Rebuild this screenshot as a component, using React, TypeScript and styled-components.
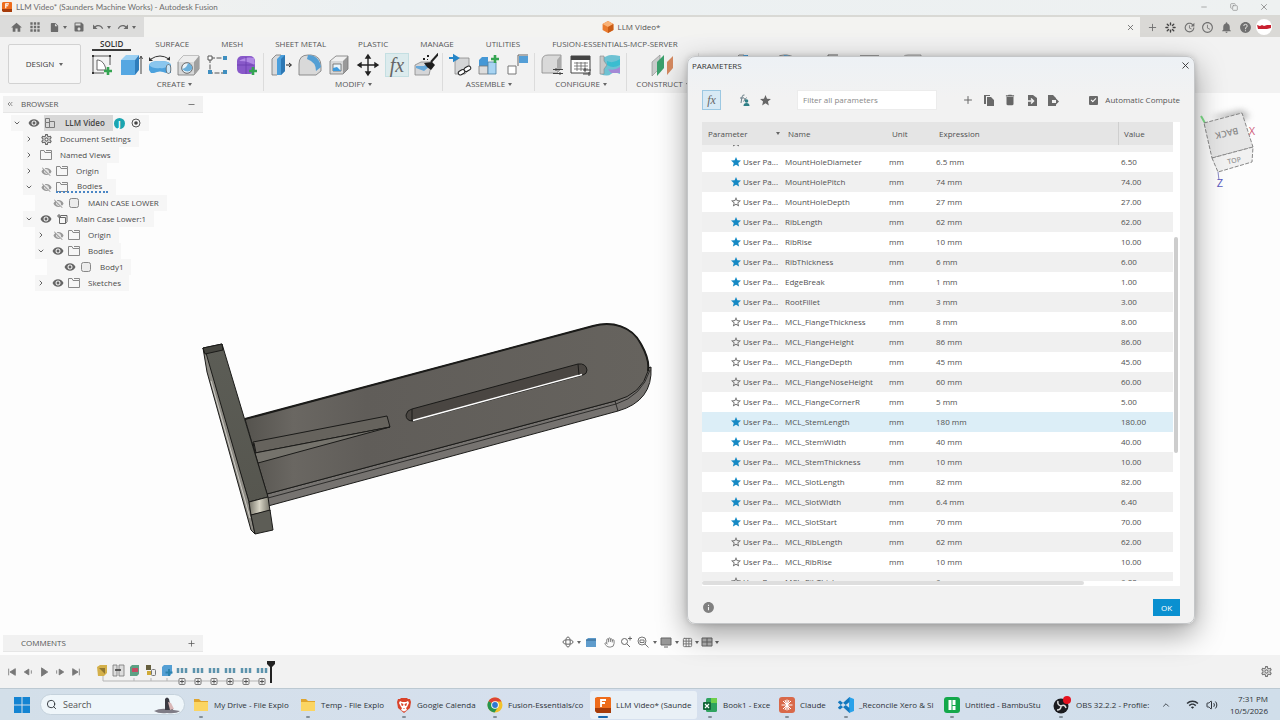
import React, { useLayoutEffect, useRef } from "react";
import styled, { createGlobalStyle, css } from "styled-components";
import {
  MdHome, MdApps, MdSave, MdNotifications, MdHelp, MdStar, MdStarBorder, MdDelete,
  MdVisibility, MdVisibilityOff, MdOutlineSettings, MdWifi, MdInfo, MdUndo, MdRedo,
  MdInsertDriveFile, MdSchedule, MdUpdate,
} from "react-icons/md";
import {
  ChevronDown, ChevronRight, ChevronUp, X, Minus, Copy, Plus, ChevronsLeft, Search, Volume2, Hand, Loader, Grid3x3,
} from "lucide-react";

const ui = `"Open Sans", "Noto Sans", sans-serif`;

const GlobalStyle = createGlobalStyle`
  *, *::before, *::after { box-sizing: border-box; }
  body { margin: 0; background: #fdfdfd; color: #444; font: 8px/12px ${ui}; }
  button, input { font: inherit; color: inherit; }
  svg { display: block; flex: none; }
`;

const Page = styled.div`
  position: relative;
  display: flex;
  flex-direction: column;
  min-height: 100vh;
  overflow: hidden;
`;

const IconButton = styled.button<{ $w?: number; $h?: number }>`
  display: flex;
  align-items: center;
  justify-content: center;
  flex: none;
  width: ${(p) => p.$w ?? 16}px;
  height: ${(p) => p.$h ?? 16}px;
  padding: 0;
  border: 0;
  background: none;
  color: inherit;
`;

const Spacer = styled.div`
  flex: 1;
`;

const Caret = styled.span`
  width: 0;
  height: 0;
  border: 2px solid transparent;
  border-top: 3px solid #666;
  border-bottom: 0;
`;

/* ---------- window title ---------- */

const TitleBar = styled.header`
  display: flex;
  align-items: center;
  gap: 4px;
  height: 17px;
  padding: 0 8px 2px 2px;
  background: linear-gradient(90deg, #f4f2ee, #ebf0f2 30%, #eef1f1);
  border-bottom: 2px solid #d9d9d5;
  color: #6d6d6d;
`;

const WindowTitle = styled.h1`
  margin: 0;
  font: 8px/12px Lato, ${ui};
`;

const WindowControls = styled.div`
  display: flex;
  gap: 14px;
  color: #888;
`;

const QuickRow = styled.div`
  display: flex;
  height: 20px;
  background: #f3f3f1;
`;

const QuickTools = styled.div`
  display: flex;
  align-items: center;
  width: 144px;
  padding-left: 8px;
  gap: 3px;
  background: #dcdcdb;
  color: #6b6b6b;
`;

const QuickGroup = styled.div`
  display: flex;
  align-items: center;
  gap: 1px;
  min-width: 22px;
`;

const DocumentTab = styled.div`
  display: flex;
  flex: 1;
  align-items: center;
  justify-content: center;
  gap: 3px;
  padding-right: 2px;
  color: #555;
`;

const AccountTools = styled.div`
  display: flex;
  align-items: center;
  justify-content: space-between;
  width: 140px;
  padding: 0 8px 0 4px;
  background: #dad9d6;
  color: #707070;
`;

/* ---------- ribbon ---------- */

const Ribbon = styled.div`
  display: flex;
  height: 56px;
  background: #f2f2f2;
`;

const Workspace = styled.button`
  display: flex;
  align-items: center;
  justify-content: center;
  flex: none;
  gap: 5px;
  width: 73px;
  height: 40px;
  margin: 7px 10px 0 8px;
  border: 1px solid #d2d2d2;
  border-radius: 2px;
  background: #f6f6f6;
  color: #3c3c3c;
`;

const RibbonBody = styled.div`
  flex: 1;
  min-width: 0;
`;

const RibbonTabs = styled.nav`
  display: flex;
  gap: 16px;
  padding: 1px 0 0 1px;
`;

const RibbonTab = styled.button<{ $active?: boolean }>`
  height: 13px;
  padding: 0 8px;
  border: 0;
  border-bottom: 2px solid ${(p) => (p.$active ? "#3a3a3a" : "transparent")};
  background: none;
  color: #555;
  line-height: 11px;
  white-space: nowrap;
  ${(p) => p.$active && css`font-weight: 600; color: #333;`}
`;

const RibbonGroups = styled.div`
  display: flex;
  margin-left: -1px;
  padding-top: 2px;
`;

const Group = styled.section`
  display: flex;
  flex-direction: column;
  align-items: center;
  padding-right: 4px;
  margin-right: 5px;
  border-right: 1px solid #dcdcdc;
`;

const GroupTools = styled.div<{ $wide?: boolean }>`
  display: flex;
  gap: ${(p) => (p.$wide ? 18 : 5)}px;
  padding-left: ${(p) => (p.$wide ? 28 : 0)}px;
`;

const GroupLabel = styled.button`
  display: flex;
  align-items: center;
  gap: 3px;
  height: 14px;
  padding: 0;
  border: 0;
  background: none;
  color: #555;
`;

const FxTool = styled(IconButton)`
  border: 1px solid #c4dfe2;
  background: #dcebed;
  font: italic 20px/20px "Liberation Serif", serif;
  color: #666;
`;

/* ---------- canvas ---------- */

const Canvas = styled.main`
  position: relative;
  display: flex;
  flex: 1;
  min-height: 562px;
  background: #fdfdfd;
`;

const Side = styled.aside`
  display: flex;
  flex-direction: column;
  justify-content: space-between;
  width: 203px;
  padding: 3px 0 3px 3px;
`;

const PanelBar = styled.div`
  display: flex;
  align-items: center;
  height: 17px;
  padding: 0 4px 0 3px;
  background: #f1f1f1;
  border-bottom: 1px solid #e6e6e6;
  color: #555;
`;

const PanelName = styled.h2<{ $inset: number }>`
  flex: 1;
  margin: 0 0 0 ${(p) => p.$inset}px;
  font: inherit;
`;

const TreeList = styled.ul`
  margin: 2px 0 0;
  padding: 0;
  list-style: none;
`;

const TreeItem = styled.li<{ $level: number }>`
  display: flex;
  padding-left: ${(p) => 8 + p.$level * 12}px;
`;

const TreeRow = styled.div`
  display: flex;
  align-items: center;
  height: 16px;
  padding-right: 8px;
  background: #f6f6f6;
  color: #4a4a4a;
`;

const Slot = styled.span<{ $w: number; $after: number }>`
  display: flex;
  justify-content: center;
  width: ${(p) => p.$w}px;
  margin-right: ${(p) => p.$after}px;
  color: #666;
`;

const NodeLabel = styled.span<{ $kind?: "root" | "pending" }>`
  display: flex;
  align-items: center;
  height: 12px;
  ${(p) => p.$kind === "root" && css`
    height: 16px; margin-left: -20px; padding: 0 8px 0 21px;
    background: rgba(160, 160, 160, 0.35);
    font-weight: 600; color: #444;
  `}
  ${(p) => p.$kind === "pending" && css`
    margin-left: -20px; padding: 0 6px 0 21px; border-bottom: 2px dotted #4a86c5;
  `}
`;

const UserBadge = styled.span`
  display: grid;
  place-items: center;
  width: 11px;
  height: 11px;
  margin: 0 6px 0 1px;
  border-radius: 50%;
  background: #1ba5b0;
  color: #fff;
  font-weight: 700;
  line-height: 11px;
`;

const ModelView = styled.svg`
  position: absolute;
  left: 190px;
  top: 217px;
`;

const ViewCube = styled.svg`
  position: absolute;
  right: 16px;
  top: 11px;
`;

const NavBar = styled.div`
  position: absolute;
  left: 50%;
  bottom: 4px;
  display: flex;
  align-items: center;
  height: 18px;
  margin-left: -80px;
  padding: 0 1px;
  gap: 2px;
  color: #777;
`;

/* ---------- timeline ---------- */

const Timeline = styled.footer`
  display: flex;
  align-items: center;
  height: 33px;
  padding: 0 6px 0 4px;
  background: #f2f2f2;
  color: #777;
`;

const Transport = styled.div`
  display: flex;
  margin-right: 12px;
`;

/* ---------- parameters dialog ---------- */

const Dialog = styled.section`
  position: absolute;
  top: 56px;
  right: 85px;
  width: 508px;
  padding: 0 14px 7px;
  border: 1px solid #c4c6c8;
  border-radius: 8px;
  background: linear-gradient(#edf1f5, #f2f2f2 40px);
  box-shadow: 0 10px 30px rgba(0, 0, 0, 0.38), 0 0 6px rgba(0, 0, 0, 0.16);
`;

const DialogTitle = styled.div`
  display: flex;
  align-items: center;
  justify-content: space-between;
  height: 17px;
  margin: 0 -13px 0 -10px;
  color: #333;
`;

const DialogName = styled.h2`
  margin: 0;
  font: inherit;
`;

const DialogTools = styled.div`
  display: flex;
  align-items: center;
  height: 20px;
  margin: 16px 0 12px;
  color: #666;
`;

const ToggleFx = styled(IconButton)`
  margin-right: 14px;
  border: 1px solid #9cc8e2;
  background: #d8eaf5;
  font: italic 12px/12px "Liberation Serif", serif;
`;

const FilterInput = styled.input`
  width: 140px;
  height: 20px;
  margin: 0 20px;
  padding: 0 5px 1px;
  border: 1px solid #ececec;
  background: #fff;
  &::placeholder { color: #888; opacity: 1; }
`;

const ComputeLabel = styled.label`
  display: flex;
  align-items: center;
  gap: 7px;
  margin-left: auto;
  white-space: nowrap;
  color: #555;
`;

const Checkbox = styled.input`
  appearance: none;
  position: relative;
  width: 9px;
  height: 9px;
  margin: 0;
  border-radius: 1px;
  background: #6a6a6a;
  &:checked::after {
    content: "";
    position: absolute;
    left: 2px;
    top: 2px;
    width: 5px;
    height: 3px;
    border: solid #fff;
    border-width: 0 0 1px 1px;
    transform: rotate(-45deg);
  }
`;

const TableFrame = styled.div`
  display: grid;
  grid-template-columns: 1fr 7px;
  grid-template-rows: 459px 5px;
  background: #fff;
`;

const TableScroll = styled.div`
  overflow: auto;
  scrollbar-width: none;
`;

const Table = styled.table`
  width: 100%;
  table-layout: fixed;
  border-spacing: 0;
  color: #505050;
`;

const Th = styled.th<{ $divider?: boolean }>`
  position: sticky;
  top: 0;
  z-index: 1;
  height: 23px;
  padding: 0 0 0 5px;
  background: #e5e5e5;
  border-left: 1px solid ${(p) => (p.$divider ? "#cfcfcf" : "#e5e5e5")};
  font-weight: 400;
  text-align: left;
`;

const HeadSort = styled.span`
  display: flex;
  align-items: center;
  justify-content: space-between;
  padding-right: 2px;
`;

const Row = styled.tr<{ $selected?: boolean }>`
  background: #fff;
  &:nth-child(odd) { background: #f0f0f0; }
  && { ${(p) => p.$selected && css`background: #dceef7;`} }
`;

const Td = styled.td`
  height: 20px;
  padding: 0 0 0 3px;
  white-space: nowrap;
`;

const OwnerCell = styled.span`
  display: flex;
  align-items: center;
  gap: 1px;
  padding-left: 25px;
`;

const VTrack = styled.div`
  padding: 115px 2px 0 1px;
`;

const VThumb = styled.div`
  height: 216px;
  border-radius: 2px;
  background: #cdcdcd;
`;

const HThumb = styled.div`
  width: 382px;
  height: 4px;
  border-radius: 2px;
  background: #dedede;
`;

const DialogFoot = styled.div`
  display: flex;
  align-items: center;
  justify-content: space-between;
  margin-top: 13px;
  color: #808080;
`;

const OkButton = styled.button`
  width: 27px;
  height: 17px;
  padding: 0;
  border: 0;
  background: #0a90d0;
  color: #fff;
`;

/* ---------- taskbar ---------- */

const Taskbar = styled.nav`
  display: flex;
  align-items: center;
  height: 32px;
  padding: 0 12px;
  border-top: 1px solid #bcc9d2;
  background: linear-gradient(90deg, #d3dfe9, #d6e0ee 50%, #d0deea);
  color: #2d3238;
`;

const SearchBox = styled.label`
  display: flex;
  align-items: center;
  flex: none;
  gap: 6px;
  width: 145px;
  height: 21px;
  margin: 0 3px 0 9px;
  padding: 0 3px 0 5px;
  border: 1px solid #c5d2dc;
  border-radius: 11px;
  background: #eff6fa;
`;

const SearchInput = styled.input`
  flex: 1;
  min-width: 0;
  padding: 0;
  border: 0;
  background: none;
  font-size: 9px;
  &::placeholder { color: #555; opacity: 1; }
`;

const TaskButton = styled.button<{ $active?: boolean; $w: number }>`
  position: relative;
  display: flex;
  align-items: center;
  gap: 5px;
  flex: none;
  width: ${(p) => p.$w}px;
  height: 28px;
  padding: 0 0 0 5px;
  border: 0;
  border-radius: 3px;
  background: ${(p) => (p.$active ? "#e9f0f6" : "none")};
  white-space: nowrap;
  &::after {
    content: "";
    position: absolute;
    left: ${(p) => (p.$active ? 8 : 11)}px;
    bottom: 1px;
    width: ${(p) => (p.$active ? 10 : 4)}px;
    height: 2px;
    border-radius: 1px;
    background: ${(p) => (p.$active ? "#1767ae" : "#84909a")};
  }
`;

const Tray = styled.div`
  display: flex;
  align-items: center;
  gap: 7px;
  margin-left: auto;
`;

const TrayToggle = styled(IconButton)`
  margin-right: 5px;
`;

const Clock = styled.time`
  margin-left: 5px;
  text-align: right;
`;

/* ---------- ribbon drawings ---------- */

const GreenPlus = ({ x, y }: { x: number; y: number }) => (
  <path d={`M${x - 4} ${y}h8M${x} ${y - 4}v8`} stroke="#35a552" strokeWidth="2.6" />
);
const Solid = () => (
  <>
    <path d="M3 8l6-5h11l-4 5z" fill="#f0f0f0" />
    <path d="M16 8l5-5v13l-5 5z" fill="#999" />
    <path d="M3 8h13v13H3z" fill="#d6d7d8" />
    <path d="M3 21V8l6-5h12v13l-5 5z" fill="none" stroke="#777" strokeWidth=".8" />
  </>
);

const drawings: Record<string, React.ReactNode> = {
  sketch: (
    <>
      <path d="M3 3h17v9M3 3v17h11" fill="none" stroke="#555" strokeWidth="1" />
      <path d="M7 17V7c5 0 8 4 9 10z" fill="#fff" stroke="#666" />
      <path d="M2 2h2v2H2zM19 2h2v2h-2zM2 19h2v2H2z" fill="#333" />
      <GreenPlus x={18} y={18} />
    </>
  ),
  extrude: (
    <>
      <path d="M2 7l5-5h13l-4 5z" fill="#9bd0f3" />
      <path d="M16 7l4-5v15l-4 5z" fill="#2f7dbb" />
      <path d="M2 7h14v15H2z" fill="#55a7e2" />
      <path d="M22 21V4M20.500 6L22 3l1.500 3" fill="none" stroke="#444" />
    </>
  ),
  revolve: (
    <>
      <path d="M1 12q1-4 11-4t11 4v8h-5q-6-3-12 0H3l-2-3z" fill="#4da2dd" />
      <path d="M1 12q1-4 11-4t11 4q-5 4-11 3-7 1-11-3z" fill="#8ac6ee" />
      <ellipse cx="20.500" cy="16" rx="2.300" ry="4.500" fill="#cde6f7" stroke="#555" strokeWidth=".7" />
      <path d="M3 6q9-6 18 0" fill="none" stroke="#333" />
      <path d="M1 4v4h4zM22 3.500v4l-3.500-1z" fill="#333" />
    </>
  ),
  hole: (
    <>
      <path d="M1 9l5-6h16v13l-5 6H1z" fill="#d6d7d8" stroke="#777" strokeWidth=".8" />
      <path d="M1 9l5-6h16l-5 6z" fill="#ededed" />
      <path d="M17 9l5-6v13l-5 6z" fill="#a0a0a0" />
      <circle cx="10" cy="15" r="5.300" fill="#e8f2f8" stroke="#666" />
      <path d="M5 16q5-1 6-6 5 2 4 6-4 5-10 0z" fill="#6db1dc" />
    </>
  ),
  pattern: (
    <>
      <path d="M4 5h15M4 5v15h15" fill="none" stroke="#555" strokeDasharray="5 1.500" />
      <path d="M2 3h4v4H2z" fill="#fff" stroke="#555" />
      <path d="M17 3h4v4h-4zM2 17h4v4H2zM17 17h4v4h-4z" fill="#3f8fc0" />
    </>
  ),
  form: (
    <>
      <rect x="2" y="3" width="18" height="18" rx="5" fill="#8859c9" />
      <path d="M4 8q7-5 15-3l1 8q-5-5-16-5z" fill="#b28ae6" />
      <path d="M11 4v17M2 12h18" stroke="#6b3cae" strokeWidth=".8" />
      <GreenPlus x={18} y={18} />
    </>
  ),
  press: (
    <>
      <path d="M3 6l4-4h5v16l-4 4H3z" fill="#d8dadc" stroke="#777" strokeWidth=".8" />
      <path d="M8 6l4-4h4v16l-4 4H8z" fill="#4b9fdc" />
      <path d="M12 6l4-4v16l-4 4z" fill="#2d78b4" />
      <path d="M17 12h5M20 10l2.500 2-2.500 2" fill="none" stroke="#222" />
    </>
  ),
  fillet: (
    <>
      <path d="M1 22V11q0-9 9-9h3q10 1 10 11v5l-5 4z" fill="#d9d9d9" stroke="#777" strokeWidth=".8" />
      <path d="M10 2q11 0 13 12l-5 4q0-9-9-12z" fill="#549fd4" />
    </>
  ),
  shell: (
    <>
      <Solid />
      <path d="M6 11h8v7H6z" fill="#e9f5fc" stroke="#666" strokeWidth=".8" />
      <path d="M6 15l4-1 4 4H6z" fill="#3f9bdd" />
    </>
  ),
  move: (
    <path d="M12 3v18M3 12h18M12 2L10 5h4zM12 22l-2-3h4zM2 12l3-2v4zM22 12l-3-2v4z" fill="#222" stroke="#222" strokeWidth="1.400" />
  ),
  clean: (
    <>
      <path d="M1 12l6-3h11l-3 13H1z" fill="#d5d6d8" stroke="#888" strokeWidth=".8" />
      <path d="M2 13h8l3-3 3 3-6 5-8-3z" fill="#68a9da" />
      <path d="M25 0L17 9" stroke="#222" strokeWidth="2" />
      <path d="M10 10l8-1 3 3-4 5-4-3z" fill="#1d1d1d" />
      <path d="M9 5h2v2H9zM13 2h2v2h-2zM13 6h1v1h-1z" fill="#222" />
    </>
  ),
  insert: (
    <>
      <path d="M7 8l4-3h10v12l-4 4H7z" fill="#d5d6d7" stroke="#888" strokeWidth=".8" />
      <path d="M1 5h6M6 2.500L10 5 6 7.500z" fill="#2686c8" stroke="#2686c8" strokeWidth="2" />
      <rect x="10" y="17" width="7" height="4" rx="2" fill="#fff" stroke="#222" transform="rotate(-30 14 19)" />
      <rect x="16" y="14" width="7" height="4" rx="2" fill="#fff" stroke="#222" transform="rotate(-30 19 16)" />
    </>
  ),
  component: (
    <>
      <path d="M2 7l3-3h6v17H2z" fill="#4598d6" />
      <path d="M2 13h9v8H2z" fill="#ddd" stroke="#777" strokeWidth=".8" />
      <path d="M11 9h8v12h-8z" fill="#a8d4f2" stroke="#4a7ea3" strokeWidth=".8" />
      <GreenPlus x={18} y={6} />
    </>
  ),
  joint: (
    <>
      <path d="M12 13V2h10" fill="none" stroke="#666" />
      <path d="M13 3h9v7h-9z" fill="#549ed6" />
      <path d="M2 13h8v8H2z" fill="#fff" stroke="#777" />
    </>
  ),
  config: (
    <>
      <path d="M2 8q0-6 6-6h13v14l-4 4H2z" fill="#d9d9d9" stroke="#888" strokeWidth=".8" />
      <path d="M17 7l4-5v14l-4 4z" fill="#aaa" />
      <path d="M13 16.500h10M13 20.500h10M16 15v3M20 19v3" stroke="#444" />
    </>
  ),
  table: (
    <>
      <path d="M2 3h19v17H2z" fill="#fff" stroke="#444" />
      <path d="M2 3h19v4H2z" fill="#444" />
      <path d="M5 10h14M5 13h14M5 16h14M8 9v9M12 9v9M16 9v9" stroke="#666" strokeWidth=".8" />
      <path d="M14 17h8M14 21h8M16 15v4M20 19v4" stroke="#444" />
    </>
  ),
  rules: (
    <>
      <path d="M2 3q4 2 7 0t13 0v18q-6-3-9 0t-11 0z" fill="#6ec2d3" />
      <path d="M2 3h4v5l3 4-3 4v5H2z" fill="#c8c8c8" stroke="#888" strokeWidth=".6" />
      <path d="M9 8q6 3 13-2v6q-7 4-13 0z" fill="#3bbdd0" />
      <path d="M10 16q6 2 12-2v6h-9z" fill="#a489d6" />
    </>
  ),
  plane: (
    <>
      <path d="M1 9l8-7v13l-8 8z" fill="#c9cbcb" stroke="#888" strokeWidth=".6" />
      <path d="M6 9l7-7v13l-7 8z" fill="#3b9f6c" />
      <path d="M16 9l6-6v12l-6 7z" fill="#d58960" />
    </>
  ),
};

const Drawing = ({ name }: { name: string }) => (
  <svg width="24" height="24" viewBox="0 0 24 24" fill="none" stroke="none">{drawings[name]}</svg>
);

const groups: { name: string; tools: string[] }[] = [
  { name: "CREATE", tools: ["sketch", "extrude", "revolve", "hole", "pattern", "form"] },
  { name: "MODIFY", tools: ["press", "fillet", "shell", "move", "fx", "clean"] },
  { name: "ASSEMBLE", tools: ["insert", "component", "joint"] },
  { name: "CONFIGURE", tools: ["config", "table", "rules"] },
];

const ribbonTabs = ["SOLID", "SURFACE", "MESH", "SHEET METAL", "PLASTIC", "MANAGE", "UTILITIES", "FUSION-ESSENTIALS-MCP-SERVER"];

/* ---------- browser tree ---------- */

type Node = {
  text: string; level: number; open?: boolean; leaf?: boolean; eye?: "on" | "off";
  icon: "doc" | "gear" | "folder" | "body" | "part"; kind?: "root" | "pending";
};

const nodes: Node[] = [
  { text: "LLM Video", level: 0, open: true, eye: "on", icon: "doc", kind: "root" },
  { text: "Document Settings", level: 1, icon: "gear" },
  { text: "Named Views", level: 1, icon: "folder" },
  { text: "Origin", level: 1, eye: "off", icon: "folder" },
  { text: "Bodies", level: 1, open: true, eye: "off", icon: "folder", kind: "pending" },
  { text: "MAIN CASE LOWER", level: 2, leaf: true, eye: "off", icon: "body" },
  { text: "Main Case Lower:1", level: 1, open: true, eye: "on", icon: "part" },
  { text: "Origin", level: 2, eye: "off", icon: "folder" },
  { text: "Bodies", level: 2, open: true, eye: "on", icon: "folder" },
  { text: "Body1", level: 3, leaf: true, eye: "on", icon: "body" },
  { text: "Sketches", level: 2, eye: "on", icon: "folder" },
];

const nodeIcon = {
  doc: (
    <svg width="12" height="12" viewBox="0 0 12 12" fill="none" stroke="#666">
      <path d="M1.500 1.500h4v4h-4zM1.500 5.500v5h4v-5M5.500 4.500h5v6h-5z" />
    </svg>
  ),
  gear: <MdOutlineSettings size={13} />,
  folder: (
    <svg width="12" height="12" viewBox="0 0 12 12" fill="none" stroke="#888">
      <path d="M.5 10.500v-9h3.500l1 2h6.500v7zM6 1.500h5.500v2" />
    </svg>
  ),
  body: (
    <svg width="12" height="12" viewBox="0 0 12 12">
      <rect x="1.500" y="1.500" width="9" height="9" rx="2" fill="#ececec" stroke="#888" />
    </svg>
  ),
  part: (
    <svg width="12" height="12" viewBox="0 0 12 12" fill="none" stroke="#666">
      <path d="M3.500 4.500h6v6h-6zM3.500 4.500l1.500-2h6v6l-1.500 2M1 3h4M3 1v4" />
    </svg>
  ),
};

const Tree = () => (
  <TreeList>
    {nodes.map((n, i) => (
      <TreeItem key={i} $level={n.level}>
        <TreeRow>
          <Slot $w={12} $after={4}>
            {!n.leaf && (n.open ? <ChevronDown size={8} strokeWidth={3} /> : <ChevronRight size={8} strokeWidth={3} />)}
          </Slot>
          {n.eye && (
            <Slot $w={14} $after={2}>
              {n.eye === "on" ? <MdVisibility size={12} /> : <MdVisibilityOff size={11} color="#999" />}
            </Slot>
          )}
          <Slot $w={14} $after={7}>{nodeIcon[n.icon]}</Slot>
          <NodeLabel $kind={n.kind}>{n.text}</NodeLabel>
          {n.kind === "root" && (
            <>
              <UserBadge>J</UserBadge>
              <svg width="10" height="10" viewBox="0 0 10 10">
                <circle cx="5" cy="5" r="4" fill="none" stroke="#555" />
                <circle cx="5" cy="5" r="1.800" fill="#444" />
              </svg>
            </>
          )}
        </TreeRow>
      </TreeItem>
    ))}
  </TreeList>
);

/* ---------- model ---------- */

const Model = () => (
  <ModelView width="480" height="240" viewBox="190 310 480 240" fill="none" stroke="#1b1b19" strokeLinejoin="round">
    <defs>
      <linearGradient id="plate" x1="0" x2="1">
        <stop offset="0" stopColor="#55534e" /><stop offset=".12" stopColor="#6a6762" />
        <stop offset=".3" stopColor="#605d59" /><stop offset="1" stopColor="#66635e" />
      </linearGradient>
      <linearGradient id="flange" x1="0" y1="0" x2="0" y2="1">
        <stop offset="0" stopColor="#5c5d56" /><stop offset="1" stopColor="#56564f" />
      </linearGradient>
      <linearGradient id="shine" x1="0" x2="1">
        <stop offset="0" stopColor="#77756a" /><stop offset=".5" stopColor="#d8d5c6" /><stop offset="1" stopColor="#77756a" />
      </linearGradient>
    </defs>
    <path d="M267 494L615 401Q638 394 648 368L651 367Q653 401 618 411L268 506z" fill="#767370" />
    <path d="M245 419L593 326C612 321 632 326 641 344Q650 360 648 371Q642 394 615 401L267 494z" fill="url(#plate)" />
    <path d="M245 419L593 326C612 321 632 326 641 344Q650 360 648 371" strokeWidth="2" />
    <path d="M268 498L616 404Q642 396 650 370M615 401L618 411" strokeWidth=".8" />
    <path d="M412 409L578 364Q586 363 587 370Q587 374 583 375L413 421Q406 421 406 415Q407 410 412 409z" fill="#4a4642" />
    <path d="M413 420.500L582 374.500" stroke="#fff" strokeWidth="1.400" />
    <path d="M412 409V421M578 364L579 375" />
    <path d="M253 442L387 416L390 427L255 453z" fill="#66635d" />
    <path d="M255 453L390 427L258 463z" fill="#75736c" />
    <path d="M254 443L256 453" />
    <path d="M203 348L222 344L268 497L249 502z" fill="url(#flange)" />
    <path d="M203 348L206 353L249 502L251 515L255 534L251 530L207 372z" fill="#8d8b84" />
    <path d="M211 381L250 518" stroke="#d0cec8" />
    <path d="M203 348L222 344L223 350L205 354z" fill="#45453f" />
    <path d="M249 502L268 497L270 511L251 515z" fill="url(#shine)" />
    <path d="M251 515L270 510L273 530L255 534z" fill="#5d5d56" />
  </ModelView>
);

const Cube = () => (
  <ViewCube width="64" height="88" viewBox="1200 104 64 88">
    <defs>
      <filter id="soft" x="-30%" y="-80%" width="160%" height="260%"><feGaussianBlur stdDeviation="3" /></filter>
    </defs>
    <path d="M1210 117L1242 110L1250 116L1240 122z" fill="#999" opacity=".7" filter="url(#soft)" />
    <path d="M1201 116l4 7" stroke="#7fe08a" strokeWidth="2" />
    <path d="M1204 123L1242 113L1253 147L1212 158z" fill="#e6e6e6" stroke="#888" strokeDasharray="4 1.500" />
    <path d="M1212 158L1253 147L1252 162L1218 172z" fill="#f1f1f1" stroke="#888" strokeDasharray="4 1.500" />
    <path d="M1218 172l1 8" stroke="#8a8ac8" />
    <g fontFamily={ui} textAnchor="middle">
      <text x="1227" y="138" fontSize="9" fontWeight="600" fill="#8a8a8a" transform="rotate(167 1227 134)">BACK</text>
      <text x="1234" y="163" fontSize="7" fontWeight="600" fill="#999" transform="rotate(-12 1234 160)">TOP</text>
      <text x="1252" y="135" fontSize="11" fill="#d0607a">X</text>
      <text x="1220" y="187" fontSize="11" fill="#5a5ac0">Z</text>
    </g>
  </ViewCube>
);

/* ---------- parameters ---------- */

type Param = [fav: boolean, name: string, expr: string, value: string];

const params: Param[] = [
  [true, "MountHoleDiameter", "6.5 mm", "6.50"],
  [true, "MountHolePitch", "74 mm", "74.00"],
  [false, "MountHoleDepth", "27 mm", "27.00"],
  [true, "RibLength", "62 mm", "62.00"],
  [true, "RibRise", "10 mm", "10.00"],
  [true, "RibThickness", "6 mm", "6.00"],
  [true, "EdgeBreak", "1 mm", "1.00"],
  [true, "RootFillet", "3 mm", "3.00"],
  [false, "MCL_FlangeThickness", "8 mm", "8.00"],
  [false, "MCL_FlangeHeight", "86 mm", "86.00"],
  [false, "MCL_FlangeDepth", "45 mm", "45.00"],
  [false, "MCL_FlangeNoseHeight", "60 mm", "60.00"],
  [false, "MCL_FlangeCornerR", "5 mm", "5.00"],
  [true, "MCL_StemLength", "180 mm", "180.00"],
  [true, "MCL_StemWidth", "40 mm", "40.00"],
  [true, "MCL_StemThickness", "10 mm", "10.00"],
  [true, "MCL_SlotLength", "82 mm", "82.00"],
  [true, "MCL_SlotWidth", "6.4 mm", "6.40"],
  [true, "MCL_SlotStart", "70 mm", "70.00"],
  [false, "MCL_RibLength", "62 mm", "62.00"],
  [false, "MCL_RibRise", "10 mm", "10.00"],
  [false, "MCL_RibThickness", "6 mm", "6.00"],
];

const ParameterTable = () => {
  const scroller = useRef<HTMLDivElement>(null);
  useLayoutEffect(() => {
    if (scroller.current) scroller.current.scrollTop = 13;
  }, []);
  return (
    <TableFrame>
      <TableScroll ref={scroller}>
        <Table>
          <colgroup>
            <col width="80" /><col width="104" /><col width="47" /><col width="185" /><col />
          </colgroup>
          <thead>
            <tr>
              <Th><HeadSort>Parameter <Caret /></HeadSort></Th>
              <Th>Name</Th>
              <Th>Unit</Th>
              <Th>Expression</Th>
              <Th $divider>Value</Th>
            </tr>
          </thead>
          <tbody>
            <Row>
              <Td colSpan={5}><OwnerCell><MdStarBorder size={12} color="#666" /></OwnerCell></Td>
            </Row>
            {params.map(([fav, name, expr, value]) => (
              <Row key={name} $selected={name === "MCL_StemLength"}>
                <Td>
                  <OwnerCell>
                    {fav ? <MdStar size={12} color="#1689c4" /> : <MdStarBorder size={12} color="#666" />}
                    User Pa...
                  </OwnerCell>
                </Td>
                <Td>{name}</Td>
                <Td>mm</Td>
                <Td>{expr}</Td>
                <Td>{value}</Td>
              </Row>
            ))}
          </tbody>
        </Table>
      </TableScroll>
      <VTrack><VThumb /></VTrack>
      <HThumb />
    </TableFrame>
  );
};

const Parameters = () => (
  <Dialog role="dialog" aria-label="Parameters">
    <DialogTitle>
      <DialogName>PARAMETERS</DialogName>
      <IconButton aria-label="Close"><X size={11} strokeWidth={2} /></IconButton>
    </DialogTitle>
    <DialogTools>
      <ToggleFx $w={19} $h={20} aria-label="All parameters">fx</ToggleFx>
      <IconButton $w={18} aria-label="User parameters">
        <svg width="12" height="12" viewBox="0 0 12 12">
          <path d="M6.500 1Q4.500 .5 4 3L3 9M2 4h3.500M5.500 3.500l3 4M8.500 3.500l-3 4" fill="none" stroke="#6a7f88" />
          <circle cx="8.500" cy="7" r="1.800" fill="#2f7f86" />
          <path d="M5.500 12q0-3 3-3t3 3z" fill="#2f7f86" />
        </svg>
      </IconButton>
      <IconButton $w={24} aria-label="Favorites"><MdStar size={13} /></IconButton>
      <FilterInput aria-label="Filter all parameters" placeholder="Filter all parameters" />
      <IconButton $w={21} aria-label="Add"><Plus size={12} /></IconButton>
      <IconButton $w={21} aria-label="Copy">
        <svg width="12" height="12" viewBox="0 0 12 12" fill="#6a6a6a"><path d="M1 1h6v1H3v8H1zM4 3h4l3 3v6H4z" /></svg>
      </IconButton>
      <IconButton $w={22} aria-label="Delete"><MdDelete size={14} /></IconButton>
      <IconButton $w={21} aria-label="Import">
        <svg width="12" height="12" viewBox="0 0 12 12"><path d="M2 1h5l4 3v8H2z" fill="#6a6a6a" /><path d="M0 7h7M5 4.500L7.500 7 5 9.500" fill="none" stroke="#f2f2f2" strokeWidth="1.500" /></svg>
      </IconButton>
      <IconButton $w={21} aria-label="Export">
        <svg width="12" height="12" viewBox="0 0 12 12"><path d="M1 1h5l3 3v2H5v3h4v3H1zM9 4.500L12 7.500 9 10.500z" fill="#6a6a6a" /></svg>
      </IconButton>
      <ComputeLabel>
        <Checkbox type="checkbox" defaultChecked />
        Automatic Compute
      </ComputeLabel>
    </DialogTools>
    <ParameterTable />
    <DialogFoot>
      <IconButton $w={12} aria-label="Information"><MdInfo size={13} /></IconButton>
      <OkButton>OK</OkButton>
    </DialogFoot>
  </Dialog>
);

/* ---------- timeline drawings ---------- */

const History = () => (
  <svg width="182" height="32" viewBox="96 656 182 32">
    <path d="M103 674v7h160M134 678v3M151 678v3M167 678v3" fill="none" stroke="#b5b5b5" />
    <path d="M97 667l3-2h7v8l-3 3h-6z" fill="#d4b04a" /><path d="M99 668h6v6z" fill="#8f7630" />
    <path d="M113 665h4v11h-4zM119 665h5v11h-5z" fill="#ddd" stroke="#777" strokeWidth=".8" /><path d="M115 670h6" stroke="#333" strokeWidth="1.500" />
    <path d="M130 667l2-2h7v9l-2 2h-7z" fill="#5da184" /><path d="M132 668h6v4h-6z" fill="#c54c63" />
    <path d="M146 665h5v5h-5z" fill="#665f3e" /><path d="M147 671h4v4h-4z" fill="#d0ab38" /><rect x="151.500" y="669.500" width="4" height="6" rx="1" fill="#eee" stroke="#777" />
    <path d="M162 667l2-2h8v8l-2 3h-8z" fill="#549fd4" /><path d="M169 669v7M165.500 672.500h7" stroke="#2c83ad" strokeWidth="2" />
    {[182, 198, 214, 230, 246, 262].map((x) => (
      <g key={x}>
        <path d={`M${x - 4} 668v5M${x} 668v5M${x + 4} 668v5`} stroke="#5c93ad" strokeWidth="2.500" />
        <rect x={x - 3} y="678.500" width="6" height="6" rx="1" fill="#eee" stroke="#777" />
        <path d={`M${x - 2} 681.500h4M${x} 679.500v4`} stroke="#555" />
      </g>
    ))}
    <path d="M267 661h8v3l-3 3v16h-2v-16l-3-3z" fill="#222" />
  </svg>
);

const transport = ["M2 2v8M10 2L3.500 6 10 10z", "M7 2.500L1.500 6 7 9.500zM10 4v4", "M3 1L10.500 6 3 11z", "M5 2.500L10.500 6 5 9.500zM2 4v4", "M10 2v8M2 2L8.500 6 2 10z"];

/* ---------- taskbar icons ---------- */

const Folder = () => (
  <svg width="16" height="16" viewBox="0 0 16 16">
    <path d="M1 2h5l2 2h7v9H1z" fill="#e0a52e" /><path d="M1 5h14v9H1z" fill="#fbd562" />
  </svg>
);
const Brave = () => (
  <svg width="16" height="16" viewBox="0 0 16 16">
    <path d="M5 1h6l1 1h2l1 3-1 6-6 5-6-5-1-6 1-3h2z" fill="#d9432b" />
    <path d="M4 4l2 1h4l2-1 1 2-2 4-1 1 1 2-3 1.500L5 13l1-2-1-1-2-4z" fill="#fff" />
    <path d="M5 6l2.500 1L7 9 5.500 8.500zM11 6L8.500 7 9 9l1.500-.5zM7 11h2l-1 1z" fill="#d9432b" />
  </svg>
);
const Chrome = () => (
  <svg width="16" height="16" viewBox="0 0 16 16">
    <circle cx="8" cy="8" r="7.500" fill="#f2c22c" />
    <path d="M8 8L1.500 4.200A7.500 7.500 0 0 1 14.500 4.500H8z" fill="#dd4436" />
    <path d="M8 8L1.500 4.200A7.500 7.500 0 0 0 7.500 15.500L11 10z" fill="#27954f" />
    <circle cx="8" cy="8" r="3.800" fill="#fff" /><circle cx="8" cy="8" r="2.900" fill="#2f77d2" />
  </svg>
);
const Fusion = ({ size = 16 }: { size?: number }) => (
  <svg width={size} height={size} viewBox="0 0 16 16">
    <path d="M2 0h13l1 1v15H2l-2-2V1z" fill="#ee6c1b" /><path d="M0 11h16v5H2l-2-2z" fill="#a63c0a" />
    <path d="M6 10V3h5M6 6h4" fill="none" stroke="#fff" strokeWidth="1.800" />
  </svg>
);
const Excel = () => (
  <svg width="16" height="16" viewBox="0 0 16 16">
    <rect x="4" y="1" width="11" height="14" rx="1.500" fill="#2fa35f" /><path d="M9 1h6v5H9z" fill="#6fd04c" />
    <rect x="1" y="5" width="8" height="8" rx="1" fill="#12693a" /><path d="M3 7l4 4M7 7l-4 4" stroke="#fff" strokeWidth="1.200" />
  </svg>
);
const Claude = () => (
  <svg width="16" height="16" viewBox="0 0 16 16">
    <rect width="16" height="16" rx="3" fill="#d9694a" />
    <path d="M8 2.500v11M2.500 8h11M4 4l8 8M12 4l-8 8M6 3l4 10M10 3L6 13" stroke="#fff" strokeWidth="1" />
  </svg>
);
const Code = () => (
  <svg width="16" height="16" viewBox="0 0 16 16">
    <path d="M11 0l5 2v12l-5 2z" fill="#2aa2ea" />
    <path d="M11.500 0v5L2 12.500 0 11 0 10.500zM11.500 16v-5L2 3.500 0 5v.5z" fill="#1478be" />
  </svg>
);
const Bambu = () => (
  <svg width="16" height="16" viewBox="0 0 16 16">
    <rect width="16" height="16" rx="3" fill="#14a84a" /><path d="M4.500 3h3v10h-3zM8.500 3h3v5h-3zM8.500 9h3v4h-3z" fill="#fff" />
  </svg>
);
const Obs = () => (
  <svg width="18" height="18" viewBox="0 0 18 18">
    <circle cx="8" cy="10" r="7.500" fill="#1b1b1f" />
    <path d="M8 10q-4-1-3-5M8 10q4-2 5 2M8 10q0 4-4 4" fill="none" stroke="#ddd" strokeWidth="1.500" />
    <circle cx="14" cy="4" r="4" fill="#e5121f" />
  </svg>
);

const apps: { text: string; w: number; icon: React.ReactNode; active?: boolean }[] = [
  { text: "My Drive - File Explo", w: 107, icon: <Folder /> },
  { text: "Temp - File Explo", w: 96, icon: <Folder /> },
  { text: "Google Calenda", w: 91, icon: <Brave /> },
  { text: "Fusion-Essentials/co", w: 108, icon: <Chrome /> },
  { text: "LLM Video* (Saunde", w: 107, icon: <Fusion />, active: true },
  { text: "Book1 - Exce", w: 77, icon: <Excel /> },
  { text: "Claude", w: 59, icon: <Claude /> },
  { text: "_Reconcile Xero & Sl", w: 106, icon: <Code /> },
  { text: "Untitled - BambuStu", w: 109, icon: <Bambu /> },
  { text: "OBS 32.2.2 - Profile:", w: 104, icon: <Obs /> },
];

export default function App() {
  return (
    <Page>
      <GlobalStyle />
      <TitleBar>
        <Fusion size={10} />
        <WindowTitle>LLM Video* (Saunders Machine Works) - Autodesk Fusion</WindowTitle>
        <Spacer />
        <WindowControls>
          <IconButton aria-label="Minimize"><Minus size={8} /></IconButton>
          <IconButton aria-label="Restore"><Copy size={8} /></IconButton>
          <IconButton aria-label="Close window"><X size={10} /></IconButton>
        </WindowControls>
      </TitleBar>

      <QuickRow>
        <QuickTools>
          <IconButton aria-label="Home"><MdHome size={13} /></IconButton>
          <IconButton aria-label="Data panel"><MdApps size={14} /></IconButton>
          <QuickGroup><IconButton aria-label="File"><MdInsertDriveFile size={11} /></IconButton><Caret /></QuickGroup>
          <IconButton aria-label="Save"><MdSave size={12} /></IconButton>
          <QuickGroup><IconButton aria-label="Undo"><MdUndo size={12} /></IconButton><Caret /></QuickGroup>
          <QuickGroup><IconButton aria-label="Redo"><MdRedo size={12} /></IconButton><Caret /></QuickGroup>
        </QuickTools>
        <DocumentTab>
          <Spacer />
          <svg width="12" height="12" viewBox="0 0 10 10">
            <path d="M5 0l4.500 2.500v5L5 10 .5 7.500v-5z" fill="#ea7b2e" /><path d="M5 0l4.500 2.500L5 5 .5 2.500z" fill="#f9b277" /><path d="M5 5v5l4.500-2.500v-5z" fill="#c95c16" />
          </svg>
          <span>LLM Video*</span>
          <Spacer />
          <IconButton aria-label="Close tab"><X size={9} /></IconButton>
        </DocumentTab>
        <AccountTools>
          <IconButton aria-label="New tab"><Plus size={11} /></IconButton>
          <IconButton aria-label="Jobs"><Loader size={11} strokeWidth={3} color="#444" /></IconButton>
          <IconButton aria-label="Extensions"><MdUpdate size={13} /></IconButton>
          <IconButton aria-label="Status"><MdSchedule size={13} /></IconButton>
          <IconButton aria-label="Notifications"><MdNotifications size={13} /></IconButton>
          <IconButton aria-label="Help"><MdHelp size={13} /></IconButton>
          <IconButton aria-label="Account">
            <svg width="16" height="16" viewBox="0 0 16 16"><circle cx="8" cy="8" r="8" fill="#fff" /><path d="M1 6l3 1 2-1 2 1 3-1 4 0v3l-4 1H2z" fill="#c8202f" /></svg>
          </IconButton>
        </AccountTools>
      </QuickRow>

      <Ribbon>
        <Workspace>DESIGN <Caret /></Workspace>
        <RibbonBody>
          <RibbonTabs>
            {ribbonTabs.map((t, i) => <RibbonTab key={t} $active={i === 0}>{t}</RibbonTab>)}
          </RibbonTabs>
          <RibbonGroups>
            {groups.map((g) => (
              <Group key={g.name}>
                <GroupTools>
                  {g.tools.map((t) =>
                    t === "fx"
                      ? <FxTool key={t} $w={24} $h={24} aria-label="Change parameters">fx</FxTool>
                      : <IconButton key={t} $w={24} $h={24} aria-label={t}><Drawing name={t} /></IconButton>
                  )}
                </GroupTools>
                <GroupLabel>{g.name} <Caret /></GroupLabel>
              </Group>
            ))}
            <Group>
              <IconButton $w={62} $h={24} aria-label="plane"><Drawing name="plane" /></IconButton>
              <GroupLabel>CONSTRUCT <Caret /></GroupLabel>
            </Group>
            <GroupTools $wide>
              {["press", "fillet", "joint", "table", "config"].map((t) => (
                <IconButton key={t} $w={24} $h={24} aria-label={t}><Drawing name={t} /></IconButton>
              ))}
            </GroupTools>
          </RibbonGroups>
        </RibbonBody>
      </Ribbon>

      <Canvas>
        <Model />
        <Side>
          <div>
            <PanelBar>
              <ChevronsLeft size={8} />
              <PanelName $inset={7}>BROWSER</PanelName>
              <IconButton aria-label="Collapse browser"><Minus size={9} /></IconButton>
            </PanelBar>
            <Tree />
          </div>
          <PanelBar>
            <PanelName $inset={15}>COMMENTS</PanelName>
            <IconButton aria-label="Add comment"><Plus size={9} /></IconButton>
          </PanelBar>
        </Side>
        <Cube />
        <NavBar>
          <IconButton $w={14} aria-label="Orbit">
            <svg width="12" height="12" viewBox="0 0 12 12" fill="none" stroke="#666"><ellipse cx="6" cy="6" rx="5" ry="2.200" /><ellipse cx="6" cy="6" rx="2.200" ry="5" /></svg>
          </IconButton>
          <Caret />
          <IconButton $w={16} aria-label="Look at">
            <svg width="12" height="12" viewBox="0 0 12 12"><path d="M1 4l2-2h8v9H1z" fill="#5f9ccc" /><path d="M1 4h10" stroke="#34648c" /></svg>
          </IconButton>
          <IconButton $w={16} aria-label="Pan"><Hand size={11} /></IconButton>
          <IconButton $w={14} aria-label="Zoom">
            <svg width="12" height="12" viewBox="0 0 12 12" fill="none" stroke="#666"><circle cx="4.500" cy="5.500" r="3" /><path d="M7 8l3 3M8 2.500h4M10 .5v4" /></svg>
          </IconButton>
          <IconButton $w={16} aria-label="Fit">
            <svg width="12" height="12" viewBox="0 0 12 12" fill="none" stroke="#777"><circle cx="5" cy="5" r="4" /><path d="M3 4h4v2.500H3zM8 8l3.500 3.500" /></svg>
          </IconButton>
          <Caret />
          <IconButton $w={14} aria-label="Display">
            <svg width="12" height="12" viewBox="0 0 12 12"><path d="M1 2h10v7H1z" fill="#999" stroke="#666" /><path d="M4 11h4" stroke="#666" /></svg>
          </IconButton>
          <Caret />
          <IconButton $w={12} aria-label="Grid"><Grid3x3 size={11} /></IconButton>
          <Caret />
          <IconButton $w={12} aria-label="Viewports">
            <svg width="12" height="12" viewBox="0 0 12 12"><path d="M1 2h10v8H1z" fill="#b5b5b5" stroke="#666" /><path d="M6 2v8M1 6h10" stroke="#666" /></svg>
          </IconButton>
          <Caret />
        </NavBar>
      </Canvas>

      <Timeline>
        <Transport>
          {transport.map((d, i) => (
            <IconButton key={i} aria-label={`Step ${i + 1}`}>
              <svg width="10" height="10" viewBox="0 0 12 12" fill="#777" stroke="#777"><path d={d} /></svg>
            </IconButton>
          ))}
        </Transport>
        <History />
        <Spacer />
        <IconButton aria-label="Timeline settings"><MdOutlineSettings size={13} /></IconButton>
      </Timeline>

      <Taskbar>
        <IconButton $w={19} aria-label="Start">
          <svg width="16" height="16" viewBox="0 0 16 16"><path d="M0 0h7.500v7.500H0zM8.500 0H16v7.500H8.500zM0 8.500h7.500V16H0zM8.500 8.500H16V16H8.500z" fill="#1484d2" /></svg>
        </IconButton>
        <SearchBox>
          <Search size={11} />
          <SearchInput aria-label="Search" placeholder="Search" />
          <svg width="28" height="18" viewBox="0 0 28 18">
            <path d="M1 15q6-3 13-2t13 2q-4 3-13 2-8 1-13-2z" fill="#7f7c86" /><path d="M12 3q2-3 4 0l1 5 3 6h-8z" fill="#3a3a42" /><path d="M15 6l3 1 3 6-4 1z" fill="#d9b8b8" />
          </svg>
        </SearchBox>
        {apps.map((a) => (
          <TaskButton key={a.text} $w={a.w} $active={a.active}>
            {a.icon}
            {a.text}
          </TaskButton>
        ))}
        <Tray>
          <TrayToggle aria-label="Hidden icons"><ChevronUp size={10} /></TrayToggle>
          <MdWifi size={13} />
          <Volume2 size={12} />
          <Clock>7:31 PM<br />10/5/2026</Clock>
        </Tray>
      </Taskbar>

      <Parameters />
    </Page>
  );
}
